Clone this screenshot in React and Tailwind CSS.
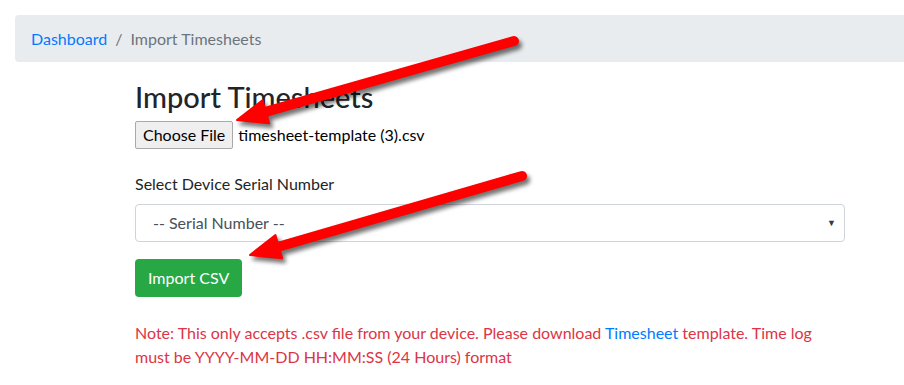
import React from "react";

const font = { fontFamily: '"Lato", "Liberation Sans", sans-serif' };

function Arrow({ x1, y1, x2, y2 }) {
  // line from tail (x1,y1) to tip (x2,y2), with a triangular head
  const dx = x2 - x1;
  const dy = y2 - y1;
  const len = Math.hypot(dx, dy);
  const ux = dx / len;
  const uy = dy / len;
  const headLen = 30;
  const headHalf = 12;
  const bx = x2 - ux * headLen;
  const by = y2 - uy * headLen;
  const px = -uy;
  const py = ux;
  const head = `${x2},${y2} ${bx + px * headHalf},${by + py * headHalf} ${bx - px * headHalf},${by - py * headHalf}`;
  return (
    <g>
      <g transform="translate(3,4)" fill="#000" stroke="#000" opacity="0.55" filter="url(#blur)">
        <line x1={x1} y1={y1} x2={bx + ux * 4} y2={by + uy * 4} strokeWidth="10" strokeLinecap="round" />
        <polygon points={head} strokeWidth="2" strokeLinejoin="round" />
      </g>
      <line x1={x1} y1={y1} x2={bx + ux * 4} y2={by + uy * 4} stroke="#ff0000" strokeWidth="10" strokeLinecap="round" />
      <polygon points={head} fill="#ff0000" stroke="#ff0000" strokeWidth="2" strokeLinejoin="round" />
    </g>
  );
}

export default function App() {
  return (
    <div className="relative h-[385px] w-[904px] overflow-hidden bg-white text-[16px] text-[#212529]" style={font}>
      <nav className="ml-[15px] mt-[15px] flex h-[47px] items-center rounded-l bg-[#e9ecef] px-4">
        <a href="#" className="text-[#007bff]">Dashboard</a>
        <span className="px-2 text-[#6c757d]">/</span>
        <span className="text-[#6c757d]">Import Timesheets</span>
      </nav>

      <div className="ml-[135px] w-[710px]">
        <h2 className="mt-[18px] text-[29px] font-medium leading-[1.2]">Import Timesheets</h2>
        <div className="mt-[6px] flex items-center">
          <button
            type="button"
            className="h-[28px] rounded-[2px] border border-[#a9a9a9] bg-[#efefef] px-[7px] text-[16px] text-black"
          >
            Choose File
          </button>
          <span className="ml-[5px] text-[16px] text-black">timesheet-template (3).csv</span>
        </div>

        <label className="mt-[23px] block leading-6">Select Device Serial Number</label>
        <div className="mt-2 flex h-[38px] items-center justify-between rounded border border-[#ced4da] pl-[17px] pr-[8px] text-[#495057]">
          <span>-- Serial Number --</span>
          <span className="text-[9px] text-[#343a40]">▼</span>
        </div>

        <button
          type="button"
          className="mt-[17px] h-[38px] rounded bg-[#28a745] px-[13px] text-white"
        >
          Import CSV
        </button>

        <p className="mt-[24px] leading-6 text-[#dc3545]">
          Note: This only accepts .csv file from your device. Please download{" "}
          <a href="#" className="text-[#007bff]">Timesheet</a> template. Time log must be YYYY-MM-DD
          HH:MM:SS (24 Hours) format
        </p>
      </div>

      <svg className="pointer-events-none absolute left-0 top-0" width="904" height="385">
        <defs>
          <filter id="blur" x="-10%" y="-50%" width="120%" height="200%">
            <feGaussianBlur stdDeviation="2" />
          </filter>
        </defs>
        <Arrow x1={514} y1={41} x2={237} y2={120} />
        <Arrow x1={522} y1={176} x2={250} y2={255} />
      </svg>
    </div>
  );
}
